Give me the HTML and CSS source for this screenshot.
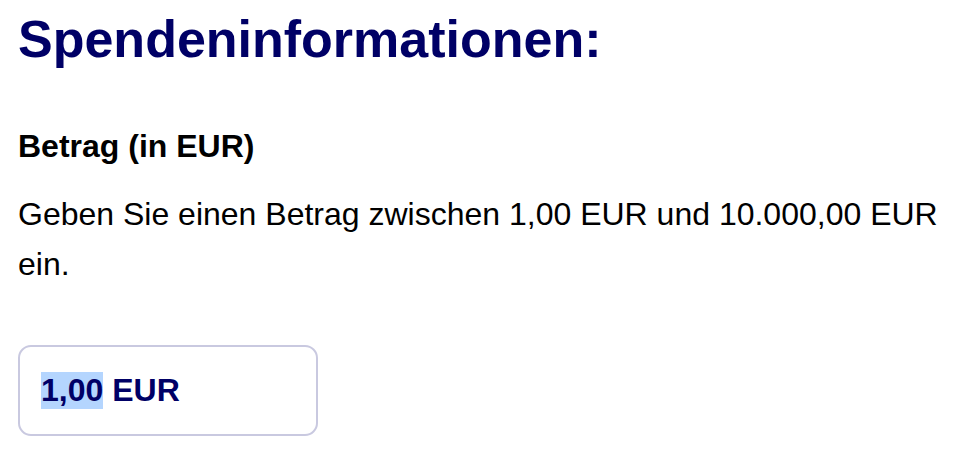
FILE: index.html
```html
<!DOCTYPE html>
<html lang="de">
<head>
<meta charset="utf-8">
<title>Spendeninformationen</title>
<link rel="stylesheet" href="styles.css">
</head>
<body>
<main class="page">
  <h1 class="title">Spendeninformationen:</h1>
  <label class="field-label" for="amount">Betrag (in EUR)</label>
  <p class="hint">Geben Sie einen Betrag zwischen 1,00 EUR und 10.000,00 EUR ein.</p>
  <div class="amount-input" id="amount"><span class="selected">1,00</span> EUR</div>
</main>
</body>
</html>
```

FILE: styles.css
```css
html, body {
  margin: 0;
  padding: 0;
  background: #ffffff;
}

.page {
  display: flex;
  flex-direction: column;
  align-items: flex-start;
  padding: 10px 16px 0 18px;
  font-family: "Liberation Sans", Arial, sans-serif;
  color: #000000;
}

.title {
  margin: 0;
  font-size: 52px;
  line-height: 59px;
  font-weight: 700;
  color: #000066;
}

.field-label {
  display: block;
  margin-top: 57px;
  font-size: 32px;
  line-height: 40px;
  font-weight: 700;
}

.hint {
  margin: 23px 0 0 0;
  font-size: 32px;
  line-height: 50px;
  max-width: 930px;
}

.amount-input {
  box-sizing: border-box;
  margin-top: 56px;
  width: 300px;
  height: 91px;
  border: 2px solid #c9c9e0;
  border-radius: 13px;
  padding: 0 21px;
  display: flex;
  align-items: center;
  white-space: pre;
  font-size: 32px;
  font-weight: 700;
  color: #000066;
}

.selected {
  background: #b4d5fe;
}
```
